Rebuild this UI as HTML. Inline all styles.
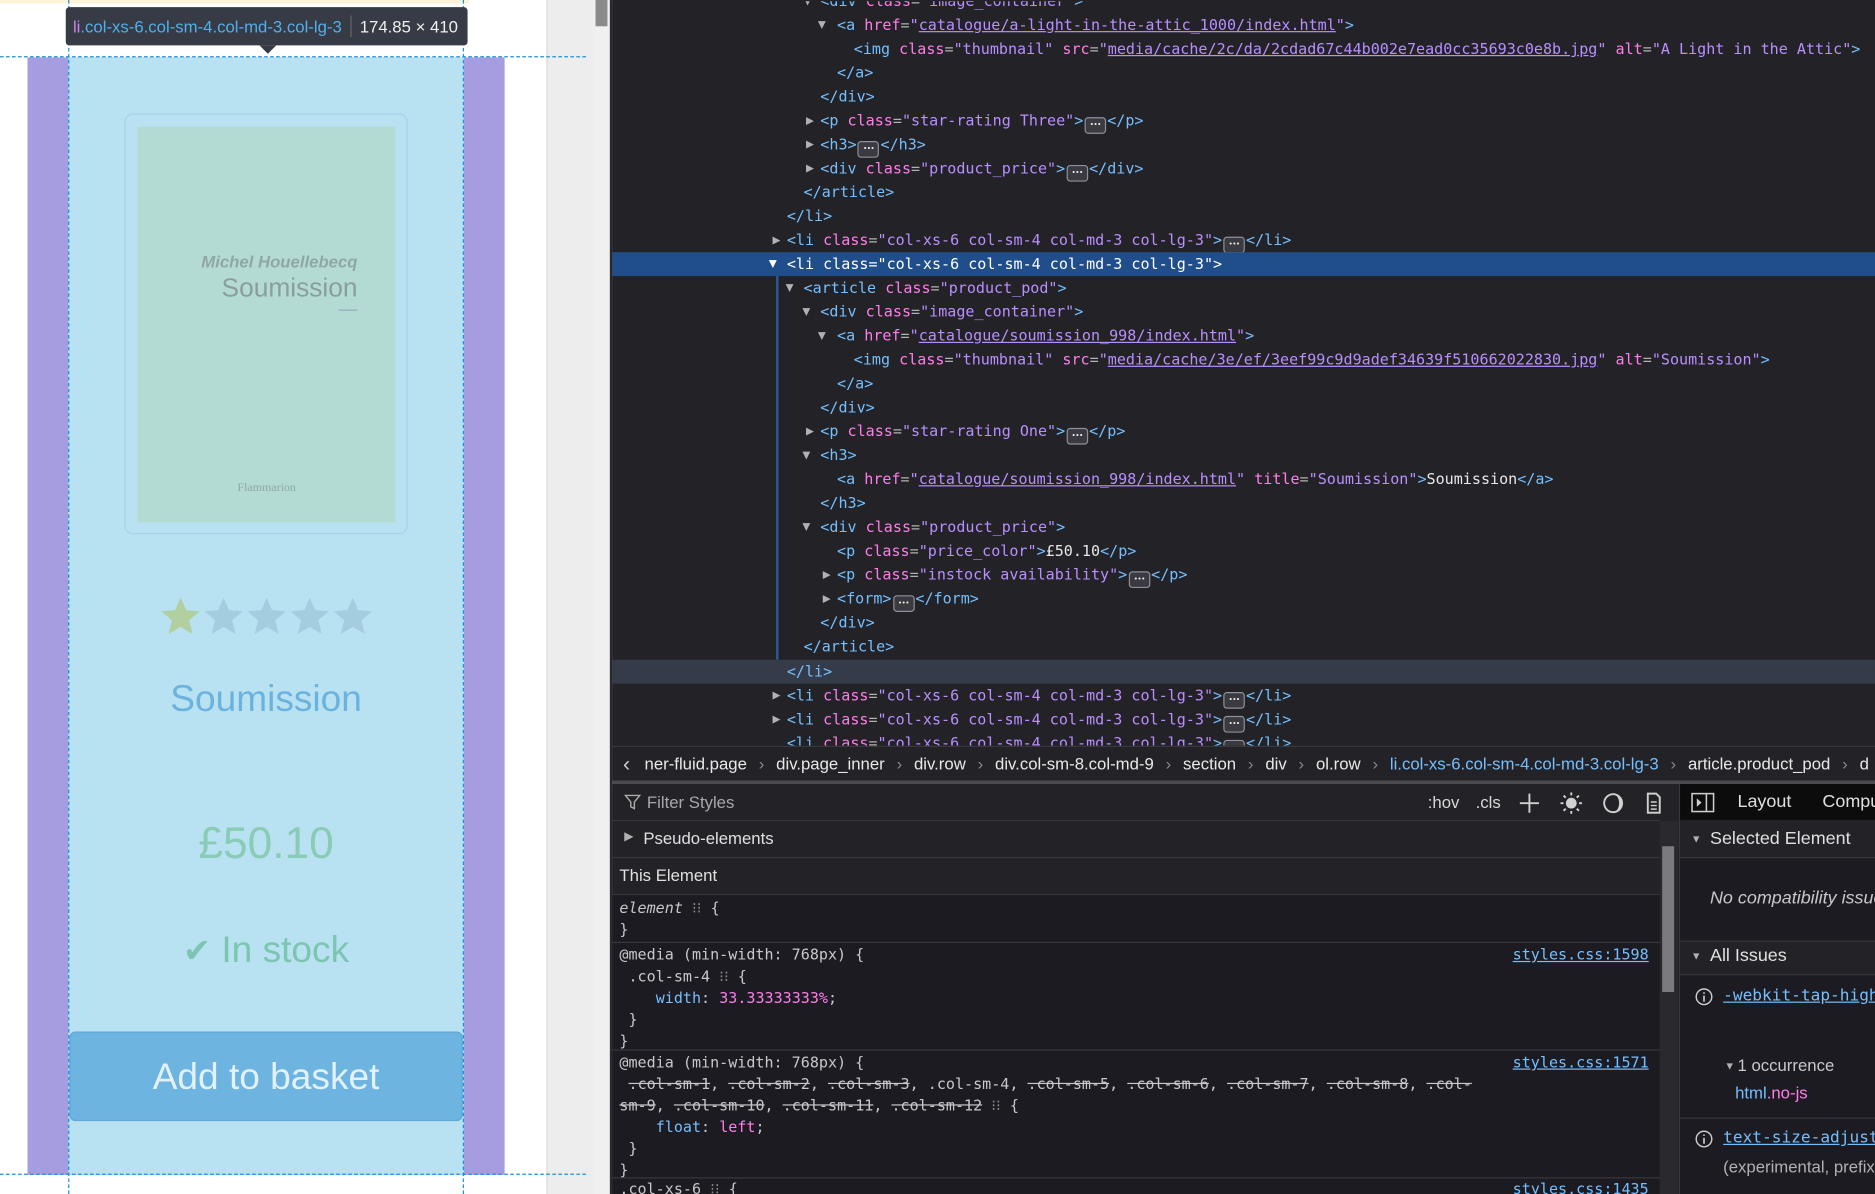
<!DOCTYPE html>
<html><head><meta charset="utf-8">
<style>
html,body{margin:0;padding:0;width:1875px;height:1194px;overflow:hidden;background:#232327}
#w{position:absolute;left:0;top:0;width:1568px;height:999px;transform:scale(1.19579,1.1952);transform-origin:0 0;overflow:hidden;font-family:"Liberation Sans",sans-serif}
.a{position:absolute}
.code{font-family:"DejaVu Sans Mono","Liberation Mono",monospace;font-size:12.6px;color:#e8e8ea;white-space:pre}
.ln{position:absolute;height:20px;line-height:20px;left:0;right:0}
.t{color:#75bfff}.n{color:#ff7de9}.v{color:#b98eff}.u{color:#b98eff;text-decoration:underline}.e{color:#b1b1b3}
.ar{position:absolute;color:#b1b1b3;font-size:11px;line-height:12px}
.b{display:inline-block;width:16px;height:12px;border:1px solid #8f8f9d;border-radius:3px;background:#3a3a40;vertical-align:-1px;font-size:6px;line-height:11px;text-align:center;color:#eee;margin:0 1px;letter-spacing:-0.5px}
.sel{background:#204e8a}
.sel *{color:#fff!important}
.ui{font-family:"Liberation Sans",sans-serif;color:#e0e0e2;font-size:14px}
.hr{position:absolute;height:1px;background:#38383d}
.mono2{font-family:"DejaVu Sans Mono","Liberation Mono",monospace;font-size:12.6px;color:#c8c8cc;white-space:pre}
.lk{color:#75bfff;text-decoration:underline}
</style></head><body><div id="w">
<div class="a" style="left:0;top:0;width:457px;height:999px;background:#fff"></div>
<div class="a" style="left:0;top:0;width:392px;height:3px;background:#fdf3d8"></div>
<div class="a" style="left:457px;top:0;width:40px;height:999px;background:#ededed;border-left:1px solid #ddd"></div>
<div class="a" style="left:497px;top:0;width:15px;height:999px;background:#f0f0f0"></div>
<div class="a" style="left:498px;top:0;width:10px;height:22px;background:#8a8a8a"></div>
<div class="a" style="left:510px;top:0;width:2px;height:999px;background:#2a2a2e"></div>

<div class="a" style="left:23px;top:48px;width:399px;height:935px;background:#a69de0"></div>
<div class="a" style="left:57px;top:48px;width:331px;height:935px;background:#b8e1f2"></div>
<div class="a" style="left:104px;top:95px;width:235px;height:350px;border:1px solid #a8d3e6;border-radius:7px"></div>
<div class="a" style="left:115px;top:106px;width:216px;height:331px;background:#b3dbd4"></div>
<div class="a" style="left:115px;top:211px;width:184px;text-align:right;font-style:italic;font-weight:bold;font-size:14px;color:#8fa8a6">Michel Houellebecq</div>
<div class="a" style="left:115px;top:228px;width:184px;text-align:right;font-size:22px;color:#8a9e9e">Soumission</div>
<div class="a" style="left:283px;top:259px;width:16px;border-top:1px solid #9ab"></div>
<div class="a" style="left:115px;top:403px;width:216px;text-align:center;font-size:10px;color:#8fa8a6;font-family:'Liberation Serif',serif">Flammarion</div>
<svg class="a" style="left:133px;top:498px" width="182" height="36" viewBox="0 0 182 36">
<path d="M18 2 L22.5 12.5 L34 13.5 L25.2 21 L28 32.5 L18 26.5 L8 32.5 L10.8 21 L2 13.5 L13.5 12.5 Z" fill="#b1cf9f"/>
<path d="M54 2 L58.5 12.5 L70 13.5 L61.2 21 L64 32.5 L54 26.5 L44 32.5 L46.8 21 L38 13.5 L49.5 12.5 Z" fill="#a5cde0"/>
<path d="M90 2 L94.5 12.5 L106 13.5 L97.2 21 L100 32.5 L90 26.5 L80 32.5 L82.8 21 L74 13.5 L85.5 12.5 Z" fill="#a5cde0"/>
<path d="M126 2 L130.5 12.5 L142 13.5 L133.2 21 L136 32.5 L126 26.5 L116 32.5 L118.8 21 L110 13.5 L121.5 12.5 Z" fill="#a5cde0"/>
<path d="M162 2 L166.5 12.5 L178 13.5 L169.2 21 L172 32.5 L162 26.5 L152 32.5 L154.8 21 L146 13.5 L157.5 12.5 Z" fill="#a5cde0"/>
</svg>
<div class="a" style="left:57px;top:567px;width:331px;text-align:center;font-size:31px;color:#6cb2df">Soumission</div>
<div class="a" style="left:57px;top:685px;width:331px;text-align:center;font-size:37px;color:#8acbb6">£50.10</div>
<div class="a" style="left:57px;top:777px;width:331px;text-align:center;font-size:31px;color:#7cc5b0"><span style="font-family:'DejaVu Sans';font-size:28px">✔</span> In stock</div>
<div class="a" style="left:58px;top:863px;width:329px;height:75px;background:#6db4e0;border-radius:5px;border:1px solid #5fa8d8;box-sizing:border-box;text-align:center;line-height:73px;font-size:31px;color:#e2f1fa">Add to basket</div>

<div class="a" style="left:0;top:47px;width:490px;border-top:1px dashed #1a8fd8"></div>
<div class="a" style="left:0;top:982px;width:490px;border-top:1px dashed #1a8fd8"></div>
<div class="a" style="left:57px;top:0;height:999px;border-left:1px dashed #1a8fd8"></div>
<div class="a" style="left:387px;top:0;height:999px;border-left:1px dashed #1a8fd8"></div>

<div class="a" style="left:55px;top:6px;width:336px;height:32px;background:#363b45;border-radius:3px;line-height:32px;font-size:14px;white-space:nowrap"><span style="margin-left:6px;color:#c583e8">li</span><span style="color:#4fb0ef">.col-xs-6.col-sm-4.col-md-3.col-lg-3</span><span style="display:inline-block;width:1px;height:18px;background:#666;vertical-align:-4px;margin:0 7px"></span><span style="color:#f0f0f0">174.85 × 410</span></div>
<div class="a" style="left:217px;top:38px;width:0;height:0;border-left:7px solid transparent;border-right:7px solid transparent;border-top:7px solid #363b45"></div>

<div class="a code" style="left:512px;top:1px;width:1056px;height:623px;background:#232327;overflow:hidden">
<div class="ln" style="top:-10px;padding-left:174px"><span class="t">&lt;div</span> <span class="n">class</span><span class="e">=</span><span class="v">"image_container"</span><span class="t">&gt;</span></div>
<span class="ar" style="left:160px;top:-6px">▼</span>
<div class="ln" style="top:10px;padding-left:188px"><span class="t">&lt;a</span> <span class="n">href</span><span class="e">=</span><span class="v">"</span><span class="u">catalogue/a-light-in-the-attic_1000/index.html</span><span class="v">"</span><span class="t">&gt;</span></div>
<span class="ar" style="left:172px;top:14px">▼</span>
<div class="ln" style="top:30px;padding-left:202px"><span class="t">&lt;img</span> <span class="n">class</span><span class="e">=</span><span class="v">"thumbnail"</span> <span class="n">src</span><span class="e">=</span><span class="v">"</span><span class="u">media/cache/2c/da/2cdad67c44b002e7ead0cc35693c0e8b.jpg</span><span class="v">"</span> <span class="n">alt</span><span class="e">=</span><span class="v">"A Light in the Attic"</span><span class="t">&gt;</span></div>
<div class="ln" style="top:50px;padding-left:188px"><span class="t">&lt;/a&gt;</span></div>
<div class="ln" style="top:70px;padding-left:174px"><span class="t">&lt;/div&gt;</span></div>
<div class="ln" style="top:90px;padding-left:174px"><span class="t">&lt;p</span> <span class="n">class</span><span class="e">=</span><span class="v">"star-rating Three"</span><span class="t">&gt;</span><span class="b">•••</span><span class="t">&lt;/p&gt;</span></div>
<span class="ar" style="left:162px;top:94px">▶</span>
<div class="ln" style="top:110px;padding-left:174px"><span class="t">&lt;h3&gt;</span><span class="b">•••</span><span class="t">&lt;/h3&gt;</span></div>
<span class="ar" style="left:162px;top:114px">▶</span>
<div class="ln" style="top:130px;padding-left:174px"><span class="t">&lt;div</span> <span class="n">class</span><span class="e">=</span><span class="v">"product_price"</span><span class="t">&gt;</span><span class="b">•••</span><span class="t">&lt;/div&gt;</span></div>
<span class="ar" style="left:162px;top:134px">▶</span>
<div class="ln" style="top:150px;padding-left:160px"><span class="t">&lt;/article&gt;</span></div>
<div class="ln" style="top:170px;padding-left:146px"><span class="t">&lt;/li&gt;</span></div>
<div class="ln" style="top:190px;padding-left:146px"><span class="t">&lt;li</span> <span class="n">class</span><span class="e">=</span><span class="v">"col-xs-6 col-sm-4 col-md-3 col-lg-3"</span><span class="t">&gt;</span><span class="b">•••</span><span class="t">&lt;/li&gt;</span></div>
<span class="ar" style="left:134px;top:194px">▶</span>
<div class="ln sel" style="top:210px;padding-left:146px"><span class="t">&lt;li</span> <span class="n">class</span><span class="e">=</span><span class="v">"col-xs-6 col-sm-4 col-md-3 col-lg-3"</span><span class="t">&gt;</span><span class="ar" style="left:131px;top:4px">▼</span></div>
<div class="a" style="left:137px;top:230px;width:2px;height:321px;background:#2a5a9a"></div>
<div class="ln" style="top:230px;padding-left:160px"><span class="t">&lt;article</span> <span class="n">class</span><span class="e">=</span><span class="v">"product_pod"</span><span class="t">&gt;</span></div>
<span class="ar" style="left:145px;top:234px">▼</span>
<div class="ln" style="top:250px;padding-left:174px"><span class="t">&lt;div</span> <span class="n">class</span><span class="e">=</span><span class="v">"image_container"</span><span class="t">&gt;</span></div>
<span class="ar" style="left:159px;top:254px">▼</span>
<div class="ln" style="top:270px;padding-left:188px"><span class="t">&lt;a</span> <span class="n">href</span><span class="e">=</span><span class="v">"</span><span class="u">catalogue/soumission_998/index.html</span><span class="v">"</span><span class="t">&gt;</span></div>
<span class="ar" style="left:172px;top:274px">▼</span>
<div class="ln" style="top:290px;padding-left:202px"><span class="t">&lt;img</span> <span class="n">class</span><span class="e">=</span><span class="v">"thumbnail"</span> <span class="n">src</span><span class="e">=</span><span class="v">"</span><span class="u">media/cache/3e/ef/3eef99c9d9adef34639f510662022830.jpg</span><span class="v">"</span> <span class="n">alt</span><span class="e">=</span><span class="v">"Soumission"</span><span class="t">&gt;</span></div>
<div class="ln" style="top:310px;padding-left:188px"><span class="t">&lt;/a&gt;</span></div>
<div class="ln" style="top:330px;padding-left:174px"><span class="t">&lt;/div&gt;</span></div>
<div class="ln" style="top:350px;padding-left:174px"><span class="t">&lt;p</span> <span class="n">class</span><span class="e">=</span><span class="v">"star-rating One"</span><span class="t">&gt;</span><span class="b">•••</span><span class="t">&lt;/p&gt;</span></div>
<span class="ar" style="left:162px;top:354px">▶</span>
<div class="ln" style="top:370px;padding-left:174px"><span class="t">&lt;h3&gt;</span></div>
<span class="ar" style="left:159px;top:374px">▼</span>
<div class="ln" style="top:390px;padding-left:188px"><span class="t">&lt;a</span> <span class="n">href</span><span class="e">=</span><span class="v">"</span><span class="u">catalogue/soumission_998/index.html</span><span class="v">"</span> <span class="n">title</span><span class="e">=</span><span class="v">"Soumission"</span><span class="t">&gt;</span>Soumission<span class="t">&lt;/a&gt;</span></div>
<div class="ln" style="top:410px;padding-left:174px"><span class="t">&lt;/h3&gt;</span></div>
<div class="ln" style="top:430px;padding-left:174px"><span class="t">&lt;div</span> <span class="n">class</span><span class="e">=</span><span class="v">"product_price"</span><span class="t">&gt;</span></div>
<span class="ar" style="left:159px;top:434px">▼</span>
<div class="ln" style="top:450px;padding-left:188px"><span class="t">&lt;p</span> <span class="n">class</span><span class="e">=</span><span class="v">"price_color"</span><span class="t">&gt;</span>£50.10<span class="t">&lt;/p&gt;</span></div>
<div class="ln" style="top:470px;padding-left:188px"><span class="t">&lt;p</span> <span class="n">class</span><span class="e">=</span><span class="v">"instock availability"</span><span class="t">&gt;</span><span class="b">•••</span><span class="t">&lt;/p&gt;</span></div>
<span class="ar" style="left:176px;top:474px">▶</span>
<div class="ln" style="top:490px;padding-left:188px"><span class="t">&lt;form&gt;</span><span class="b">•••</span><span class="t">&lt;/form&gt;</span></div>
<span class="ar" style="left:176px;top:494px">▶</span>
<div class="ln" style="top:510px;padding-left:174px"><span class="t">&lt;/div&gt;</span></div>
<div class="ln" style="top:530px;padding-left:160px"><span class="t">&lt;/article&gt;</span></div>
<div class="ln" style="top:551px;padding-left:146px;background:#353b48"><span class="t">&lt;/li&gt;</span></div>
<div class="ln" style="top:571px;padding-left:146px"><span class="t">&lt;li</span> <span class="n">class</span><span class="e">=</span><span class="v">"col-xs-6 col-sm-4 col-md-3 col-lg-3"</span><span class="t">&gt;</span><span class="b">•••</span><span class="t">&lt;/li&gt;</span></div>
<span class="ar" style="left:134px;top:575px">▶</span>
<div class="ln" style="top:591px;padding-left:146px"><span class="t">&lt;li</span> <span class="n">class</span><span class="e">=</span><span class="v">"col-xs-6 col-sm-4 col-md-3 col-lg-3"</span><span class="t">&gt;</span><span class="b">•••</span><span class="t">&lt;/li&gt;</span></div>
<span class="ar" style="left:134px;top:595px">▶</span>
<div class="ln" style="top:611px;padding-left:146px"><span class="t">&lt;li</span> <span class="n">class</span><span class="e">=</span><span class="v">"col-xs-6 col-sm-4 col-md-3 col-lg-3"</span><span class="t">&gt;</span><span class="b">•••</span><span class="t">&lt;/li&gt;</span></div>
</div>

<div class="a ui" style="left:512px;top:624px;width:1056px;height:29px;background:#232327;border-top:1px solid #38383d;line-height:28px;white-space:nowrap;overflow:hidden;font-size:14px;color:#e8e8ea">
<span style="position:absolute;left:9px;font-size:18px;color:#ccc">‹</span>
<span style="position:absolute;left:27px">ner-fluid.page <span style="color:#888;margin:0 6px">›</span> div.page_inner <span style="color:#888;margin:0 6px">›</span> div.row <span style="color:#888;margin:0 6px">›</span> div.col-sm-8.col-md-9 <span style="color:#888;margin:0 6px">›</span> section <span style="color:#888;margin:0 6px">›</span> div <span style="color:#888;margin:0 6px">›</span> ol.row <span style="color:#888;margin:0 6px">›</span> <span style="color:#75bfff">li.col-xs-6.col-sm-4.col-md-3.col-lg-3</span> <span style="color:#888;margin:0 6px">›</span> article.product_pod <span style="color:#888;margin:0 6px">›</span> d</span>
</div>
<div class="a" style="left:512px;top:653px;width:1056px;height:3px;background:#4a4a4f"></div>

<div class="a" style="left:512px;top:656px;width:892px;height:343px;background:#232327"></div>
<svg class="a" style="left:522px;top:664px" width="14" height="14" viewBox="0 0 14 14"><path d="M1 1.5h12L8.5 7v5.5l-3-1.5V7z" fill="none" stroke="#aaa" stroke-width="1.2"/></svg>
<div class="a ui" style="left:541px;top:663px;color:#a8a8ac;font-size:14px">Filter Styles</div>
<div class="a ui" style="left:1194px;top:663px;color:#d8d8da;font-size:14px">:hov</div>
<div class="a ui" style="left:1234px;top:663px;color:#d8d8da;font-size:14px">.cls</div>
<svg class="a" style="left:1270px;top:663px" width="120" height="18" viewBox="0 0 120 18">
<path d="M9 1v16M1 9h16" stroke="#d0d0d0" stroke-width="1.6"/>
<circle cx="44" cy="9" r="4.5" fill="#d0d0d0"/><g stroke="#d0d0d0" stroke-width="1.6"><path d="M44 0v2.5M44 15.5V18M35 9h2.5M50.5 9H53M37.6 2.6l1.8 1.8M48.6 13.6l1.8 1.8M37.6 15.4l1.8-1.8M48.6 4.4l1.8-1.8"/></g>
<circle cx="79" cy="9" r="7.5" fill="none" stroke="#d0d0d0" stroke-width="1.6"/><path d="M79 1.5a7.5 7.5 0 0 1 0 15a5 7.5 0 0 0 0-15z" fill="#d0d0d0"/>
<path d="M108 1h7l3 3v13h-10z" fill="none" stroke="#d0d0d0" stroke-width="1.6"/><path d="M110.5 8h5M110.5 11h5M110.5 14h5" stroke="#d0d0d0" stroke-width="1.2"/>
</svg>
<div class="hr" style="left:512px;top:686px;width:876px"></div>
<div class="a" style="left:522px;top:695px;color:#b1b1b3;font-size:10px">▶</div>
<div class="a ui" style="left:538px;top:693px;font-size:14px">Pseudo-elements</div>
<div class="hr" style="left:512px;top:717px;width:876px"></div>
<div class="a ui" style="left:518px;top:724px;font-size:14px">This Element</div>
<div class="hr" style="left:512px;top:748px;width:876px"></div>
<div class="a" style="left:512px;top:749px;width:876px;height:250px;background:#1c1b22"></div>
<div class="a mono2" style="left:518px;top:751px;line-height:18px"><i>element</i> <span style="color:#888">⁝⁝</span> {
}</div>
<div class="hr" style="left:512px;top:788px;width:876px"></div>
<div class="a mono2" style="left:518px;top:790px;line-height:18px">@media (min-width: 768px) {
 .col-sm-4 <span style="color:#888">⁝⁝</span> {
    <span style="color:#75bfff">width</span>: <span style="color:#ff7de9">33.33333333%</span>;
 }
}</div>
<div class="a mono2 lk" style="left:1265px;top:790px;line-height:18px">styles.css:1598</div>
<div class="hr" style="left:512px;top:878px;width:876px"></div>
<div class="a mono2" style="left:518px;top:880px;line-height:18px">@media (min-width: 768px) {
 <s>.col-sm-1</s>, <s>.col-sm-2</s>, <s>.col-sm-3</s>, .col-sm-4, <s>.col-sm-5</s>, <s>.col-sm-6</s>, <s>.col-sm-7</s>, <s>.col-sm-8</s>, <s>.col-</s>
<s>sm-9</s>, <s>.col-sm-10</s>, <s>.col-sm-11</s>, <s>.col-sm-12</s> <span style="color:#888">⁝⁝</span> {
    <span style="color:#75bfff">float</span>: <span style="color:#ff7de9">left</span>;
 }
}</div>
<div class="a mono2 lk" style="left:1265px;top:880px;line-height:18px">styles.css:1571</div>
<div class="hr" style="left:512px;top:985px;width:876px"></div>
<div class="a mono2" style="left:518px;top:986px;line-height:18px">.col-xs-6 <span style="color:#888">⁝⁝</span> {</div>
<div class="a mono2 lk" style="left:1265px;top:986px;line-height:18px">styles.css:1435</div>
<div class="a" style="left:1388px;top:687px;width:15px;height:312px;background:#2a2a2e"></div>
<div class="a" style="left:1390px;top:708px;width:10px;height:122px;background:#7b7b7f"></div>

<div class="a" style="left:1404px;top:656px;width:1px;height:343px;background:#38383d"></div>
<div class="a" style="left:1405px;top:656px;width:163px;height:30px;background:#0c0c0d"></div>
<svg class="a" style="left:1414px;top:663px" width="20" height="17" viewBox="0 0 20 17"><rect x="1" y="1" width="18" height="15" fill="none" stroke="#ccc" stroke-width="1.3"/><path d="M13 1v15" stroke="#ccc" stroke-width="1.3"/><path d="M5 5l4 3.5L5 12z" fill="#ccc"/></svg>
<div class="a ui" style="left:1453px;top:662px;font-size:15px">Layout</div>
<div class="a ui" style="left:1524px;top:662px;font-size:15px">Compu</div>
<div class="a" style="left:1405px;top:687px;width:163px;height:312px;background:#1c1b22"></div>
<div class="a" style="left:1405px;top:687px;width:163px;height:30px;background:#232327"></div>
<div class="a" style="left:1414px;top:697px;color:#b1b1b3;font-size:9px">▼</div>
<div class="a ui" style="left:1430px;top:693px;font-size:15px;white-space:nowrap">Selected Element</div>
<div class="hr" style="left:1405px;top:717px;width:163px"></div>
<div class="a ui" style="left:1430px;top:743px;font-size:15px;font-style:italic;color:#c8c8cc;white-space:nowrap">No compatibility issues</div>
<div class="hr" style="left:1405px;top:787px;width:163px"></div>
<div class="a" style="left:1405px;top:788px;width:163px;height:27px;background:#232327"></div>
<div class="a" style="left:1414px;top:795px;color:#b1b1b3;font-size:9px">▼</div>
<div class="a ui" style="left:1430px;top:791px;font-size:15px">All Issues</div>
<div class="hr" style="left:1405px;top:815px;width:163px"></div>
<svg class="a" style="left:1417px;top:826px" width="16" height="16" viewBox="0 0 16 16"><circle cx="8" cy="8" r="6.5" fill="none" stroke="#ccc" stroke-width="1.2"/><path d="M8 7v5M8 4.2v1.2" stroke="#ccc" stroke-width="1.4"/></svg>
<div class="a mono2 lk" style="left:1441px;top:825px;font-size:13.5px">-webkit-tap-highlight</div>
<div class="a" style="left:1442px;top:887px;color:#b1b1b3;font-size:9px">▼</div>
<div class="a ui" style="left:1453px;top:883px;font-size:14px;color:#c8c8cc;white-space:nowrap">1 occurrence</div>
<div class="a ui" style="left:1451px;top:906px;font-size:14px;white-space:nowrap"><span style="color:#75bfff">html</span><span style="color:#ff7de9">.no-js</span></div>
<div class="hr" style="left:1405px;top:935px;width:163px"></div>
<svg class="a" style="left:1417px;top:945px" width="16" height="16" viewBox="0 0 16 16"><circle cx="8" cy="8" r="6.5" fill="none" stroke="#ccc" stroke-width="1.2"/><path d="M8 7v5M8 4.2v1.2" stroke="#ccc" stroke-width="1.4"/></svg>
<div class="a mono2 lk" style="left:1441px;top:944px;font-size:13.5px">text-size-adjust</div>
<div class="a ui" style="left:1441px;top:968px;font-size:14px;color:#b1b1b3;white-space:nowrap">(experimental, prefix</div>
</div></body></html>
